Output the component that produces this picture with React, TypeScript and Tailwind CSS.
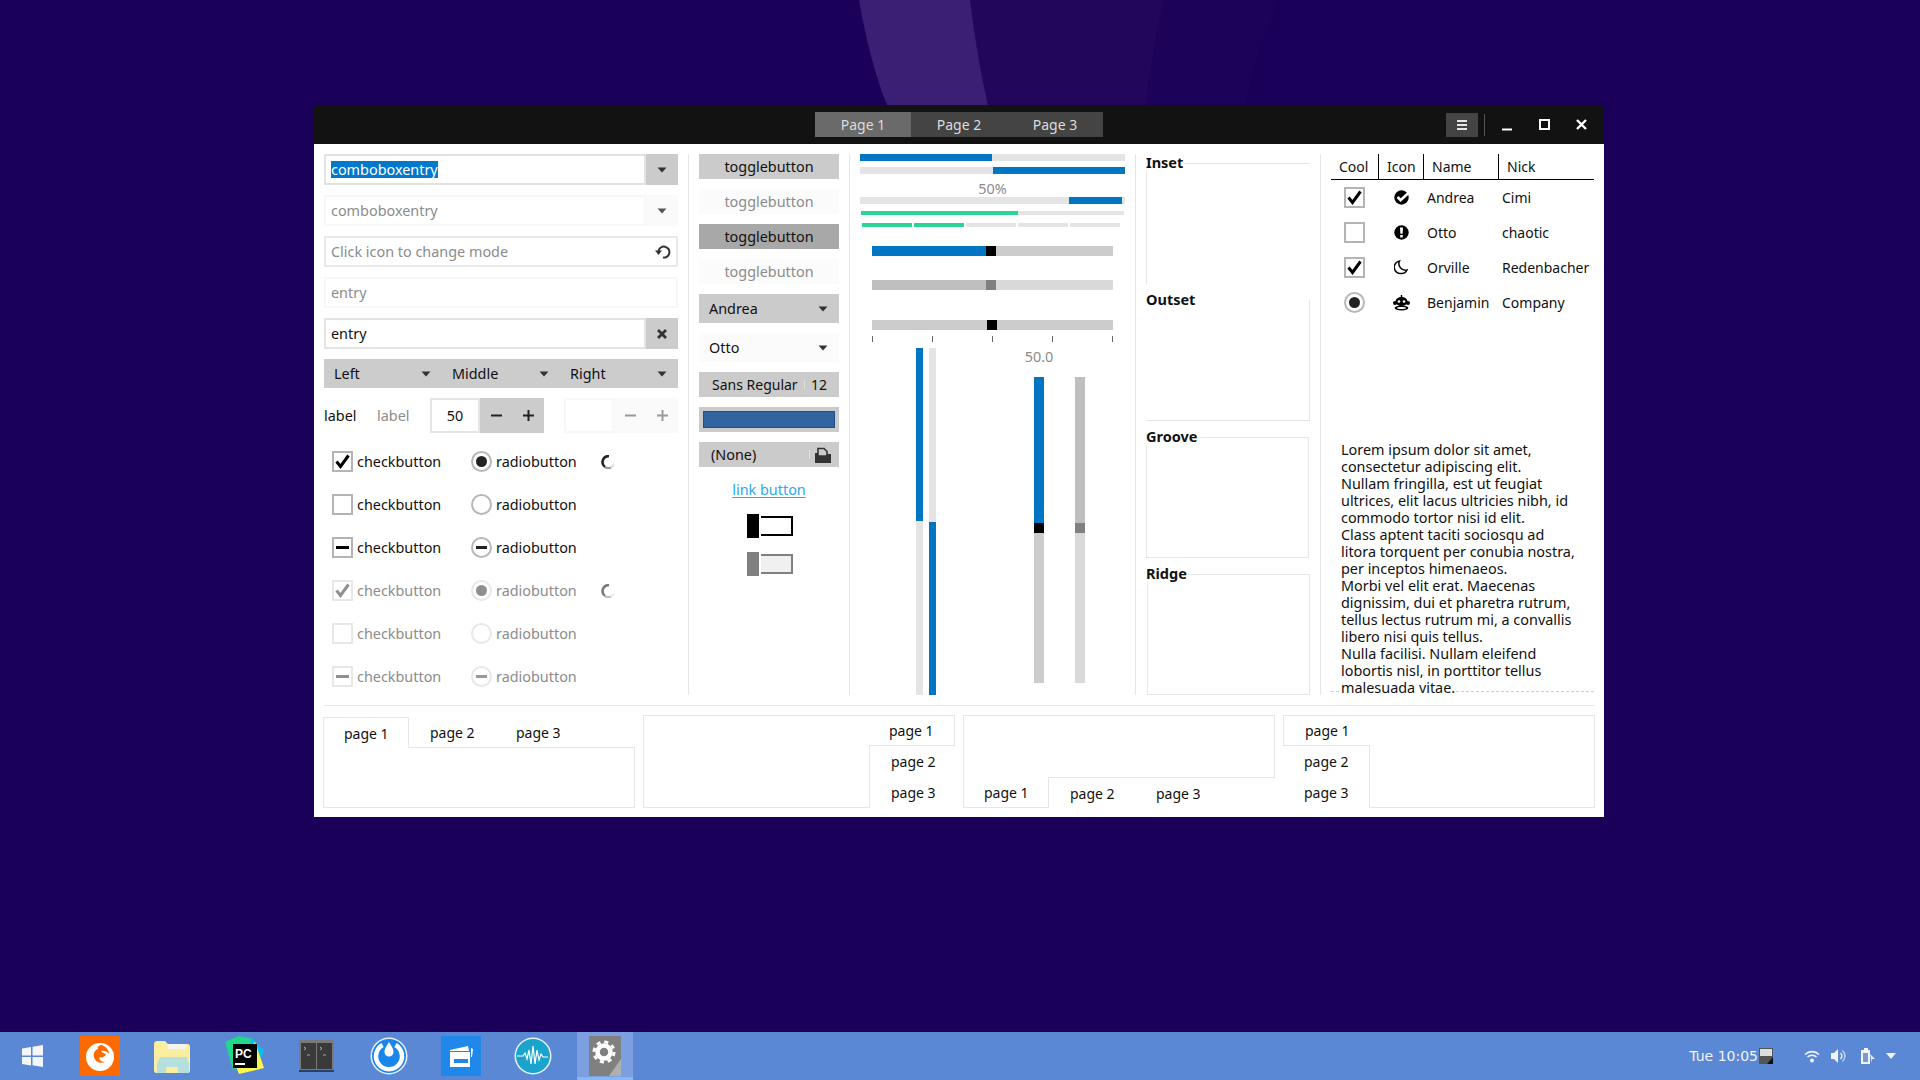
import type { ReactNode } from 'react';

function Arrow({ color = '#333' }: { color?: string }) {
	return (
		<svg width="10" height="6" viewBox="0 0 10 6" className="shrink-0">
			<path d="M0.5 0.5h9L5 5.5z" fill={color} />
		</svg>
	);
}

function Separator() {
	return <div className="w-px shrink-0 bg-[#e6e6e6]" />;
}

function Check({ mode, disabled }: { mode: 'on' | 'off' | 'mixed'; disabled?: boolean }) {
	const mark = disabled ? '#8f8f8f' : '#000';
	return (
		<div
			className={`flex h-[21px] w-[21px] shrink-0 items-center justify-center border-2 bg-white ${disabled ? 'border-[#e8e8e8]' : 'border-[#b4b4b4]'}`}
		>
			{mode === 'on' && (
				<svg width="17" height="17" viewBox="0 0 17 17">
					<path d="M2.5 8.5l4 5L14.5 2.5" fill="none" stroke={mark} strokeWidth="3" />
				</svg>
			)}
			{mode === 'mixed' && <div className="h-[3px] w-[13px]" style={{ background: mark }} />}
		</div>
	);
}

function Radio({ mode, disabled }: { mode: 'on' | 'off' | 'mixed'; disabled?: boolean }) {
	return (
		<div
			className={`flex h-[21px] w-[21px] shrink-0 items-center justify-center rounded-full border-2 bg-white ${disabled ? 'border-[#e8e8e8]' : 'border-[#b8b8b8]'}`}
		>
			{mode === 'on' && (
				<div className={`h-[11px] w-[11px] rounded-full ${disabled ? 'bg-[#8f8f8f]' : 'bg-[#222]'}`} />
			)}
			{mode === 'mixed' && (
				<div className={`h-[3px] w-[11px] ${disabled ? 'bg-[#999]' : 'bg-[#222]'}`} />
			)}
		</div>
	);
}

function Spinner({ faded }: { faded?: boolean }) {
	return (
		<svg width="14" height="14" viewBox="0 0 14 14" className={faded ? 'opacity-60' : ''}>
			<path d="M8 1.2A6 6 0 0 0 4 12" fill="none" stroke="#222" strokeWidth="2.6" />
			<path d="M4 12a6 6 0 0 0 6 .5" fill="none" stroke="#999" strokeWidth="2.2" />
			<path d="M10 12.5a6 6 0 0 0 2.8-3" fill="none" stroke="#ddd" strokeWidth="2" />
		</svg>
	);
}

function Entry({
	children,
	border,
	button,
	buttonBg,
}: {
	children: ReactNode;
	border: string;
	button?: ReactNode;
	buttonBg?: string;
}) {
	return (
		<div className="flex h-[31px] w-[354px]">
			<div className={`flex flex-1 items-center justify-between border-2 bg-white pl-[5px] pr-[2px] ${border}`}>
				{children}
			</div>
			{button && <div className={`flex w-[32px] items-center justify-center ${buttonBg}`}>{button}</div>}
		</div>
	);
}

function ChecksRow({
	check,
	radio,
	disabled,
	spinner,
}: {
	check: 'on' | 'off' | 'mixed';
	radio: 'on' | 'off' | 'mixed';
	disabled?: boolean;
	spinner?: boolean;
}) {
	const text = disabled ? 'text-[#8c8c8c]' : 'text-[#111]';
	return (
		<div className={`flex h-[43px] items-center pl-[8px] ${text}`}>
			<Check mode={check} disabled={disabled} />
			<span className="ml-[4px] w-[114px]">checkbutton</span>
			<Radio mode={radio} disabled={disabled} />
			<span className="ml-[4px] w-[105px]">radiobutton</span>
			{spinner && <Spinner faded={disabled} />}
		</div>
	);
}

function FirstColumn() {
	return (
		<div className="w-[354px] shrink-0">
			<div className="flex flex-col gap-[10px]">
				<Entry border="border-[#dfe3e5]" button={<Arrow />} buttonBg="bg-[#cbcbcb]">
					<span className="bg-[#0078cc] leading-[17px] text-white">comboboxentry</span>
				</Entry>
				<Entry border="border-[#f8f8f8]" button={<Arrow color="#555" />} buttonBg="bg-[#fafafa]">
					<span className="text-[#8c8c8c]">comboboxentry</span>
				</Entry>
				<Entry border="border-[#e9e9e9]">
					<span className="text-[#8c8c8c]">Click icon to change mode</span>
					<svg width="16" height="16" viewBox="0 0 16 16" className="mr-[3px]">
						<path d="M3.5 7A5.5 5.5 0 1 1 8 13.5" fill="none" stroke="#333" strokeWidth="2" />
						<path d="M0 6.5h7L3.5 11z" fill="#333" />
					</svg>
				</Entry>
				<Entry border="border-[#f8f8f8]">
					<span className="text-[#8c8c8c]">entry</span>
				</Entry>
				<Entry
					border="border-[#e4e4e4]"
					buttonBg="bg-[#cccccc]"
					button={
						<svg width="10" height="10" viewBox="0 0 10 10">
							<path d="M1 1l8 8M9 1l-8 8" stroke="#333" strokeWidth="2.8" />
						</svg>
					}
				>
					<span className="text-[#111]">entry</span>
				</Entry>
				<div className="flex h-[29px] bg-[#cccccc] text-[#111]">
					{['Left', 'Middle', 'Right'].map((item) => (
						<div key={item} className="flex w-[118px] items-center justify-between pl-[10px] pr-[11px]">
							<span>{item}</span>
							<Arrow />
						</div>
					))}
				</div>
				<div className="flex h-[35px] items-center">
					<span className="w-[53px] text-[#111]">label</span>
					<span className="w-[53px] text-[#8c8c8c]">label</span>
					<div className="flex h-[35px] w-[50px] items-center justify-center border-2 border-[#e6e6e6] text-[#111]">50</div>
					<div className="flex h-[35px] w-[64px] bg-[#cccccc]">
						<SpinSign sign="minus" color="#222" />
						<SpinSign sign="plus" color="#222" />
					</div>
					<div className="ml-[20px] h-[35px] w-[50px] border-2 border-[#f8f8f8]" />
					<div className="flex h-[35px] w-[64px] bg-[#fafafa]">
						<SpinSign sign="minus" color="#9a9a9a" />
						<SpinSign sign="plus" color="#9a9a9a" />
					</div>
				</div>
			</div>
			<div className="mt-[7px]">
				<ChecksRow check="on" radio="on" spinner />
				<ChecksRow check="off" radio="off" />
				<ChecksRow check="mixed" radio="mixed" />
				<ChecksRow check="on" radio="on" disabled spinner />
				<ChecksRow check="off" radio="off" disabled />
				<ChecksRow check="mixed" radio="mixed" disabled />
			</div>
		</div>
	);
}

function SpinSign({ sign, color }: { sign: 'plus' | 'minus'; color: string }) {
	return (
		<div className="flex w-[32px] items-center justify-center">
			<svg width="11" height="11" viewBox="0 0 11 11">
				<path d={sign === 'plus' ? 'M0 5.5h11M5.5 0v11' : 'M0 5.5h11'} stroke={color} strokeWidth="2" />
			</svg>
		</div>
	);
}

function Toggle({ bg, color }: { bg: string; color: string }) {
	return <div className={`flex h-[25px] items-center justify-center ${bg} ${color}`}>togglebutton</div>;
}

function ComboButton({ label, bg }: { label: string; bg: string }) {
	return (
		<div className={`flex h-[29px] items-center justify-between pl-[10px] pr-[11px] text-[#111] ${bg}`}>
			<span>{label}</span>
			<Arrow />
		</div>
	);
}

function SecondColumn() {
	return (
		<div className="flex w-[140px] shrink-0 flex-col gap-[10px]">
			<Toggle bg="bg-[#cbcbcb]" color="text-[#111]" />
			<Toggle bg="bg-[#fbfbfb]" color="text-[#8c8c8c]" />
			<Toggle bg="bg-[#a8a8a8]" color="text-[#111]" />
			<Toggle bg="bg-[#fbfbfb]" color="text-[#8c8c8c]" />
			<ComboButton label="Andrea" bg="bg-[#cbcbcb]" />
			<ComboButton label="Otto" bg="bg-[#fbfbfb]" />
			<div className="flex h-[25px] items-center bg-[#cbcbcb] pl-[13px] text-[14px] text-[#111]">
				<span className="w-[92px]">Sans Regular</span>
				<span className="h-[9px] w-px bg-[#e0e0e0]" />
				<span className="ml-[6px]">12</span>
			</div>
			<div className="flex h-[25px] items-center justify-center bg-[#cbcbcb]">
				<div className="h-[17px] w-[132px] border border-[#20508b] bg-[#32659f]" />
			</div>
			<div className="flex h-[25px] items-center bg-[#cbcbcb] pl-[12px] text-[#111]">
				<span className="w-[98px]">(None)</span>
				<span className="h-[9px] w-px bg-[#e0e0e0]" />
				<svg width="16" height="16" viewBox="0 0 16 16" className="ml-[5px]">
					<path d="M3 1.5h6l3 3V9H3z" fill="none" stroke="#333" strokeWidth="1.6" />
					<path d="M0 16V6h3v3h9V7h4v9z" fill="#333" />
				</svg>
			</div>
			<div className="mt-[2px] flex justify-center">
				<span className="text-[#2ea8ea] underline underline-offset-2">link button</span>
			</div>
			<SwitchOff handle="bg-black" box="border-black bg-white" className="mt-[3px]" />
			<SwitchOff handle="bg-[#808080]" box="border-[#808080] bg-[#f0f0f0]" className="mt-[4px]" />
		</div>
	);
}

function SwitchOff({ handle, box, className }: { handle: string; box: string; className: string }) {
	return (
		<div className={`flex items-center justify-center gap-[2px] pl-[2px] ${className}`}>
			<div className={`h-[24px] w-[12px] ${handle}`} />
			<div className={`h-[20px] w-[32px] border-2 border-l-0 ${box}`} />
		</div>
	);
}

function Hscale({ left, handle, right, width, className }: { left: string; handle: string; right: string; width: string; className: string }) {
	return (
		<div className={`ml-[12px] flex h-[10px] w-[241px] shrink-0 ${right} ${className}`}>
			<div className={`h-full ${left} ${width}`} />
			<div className={`h-full w-[10px] ${handle}`} />
		</div>
	);
}

function Vscale({ top, handle, bottom }: { top: string; handle: string; bottom: string }) {
	return (
		<div className={`flex h-[306px] w-[10px] flex-col ${bottom}`}>
			<div className={`h-[146px] w-full ${top}`} />
			<div className={`h-[10px] w-full ${handle}`} />
		</div>
	);
}

function ThirdColumn() {
	return (
		<div className="flex w-[265px] shrink-0 flex-col">
			<div className="h-[7px] shrink-0 bg-[#e4e4e4]">
				<div className="h-full w-[132px] bg-[#0075c4]" />
			</div>
			<div className="mt-[6px] flex h-[7px] shrink-0 justify-end bg-[#e4e4e4]">
				<div className="h-full w-[132px] bg-[#0075c4]" />
			</div>
			<div className="mt-[6px] h-[17px] shrink-0 text-center leading-[18px] text-[#8c8c8c]">50%</div>
			<div className="flex h-[7px] shrink-0 justify-end bg-[#e4e4e4] pr-[3px]">
				<div className="h-full w-[53px] bg-[#0075c4]" />
			</div>
			<div className="mx-px mt-[7px] h-[4px] shrink-0 bg-[#e4e4e4]">
				<div className="h-full w-[157px] bg-[#27d692]" />
			</div>
			<div className="mt-[8px] flex shrink-0 gap-[2px] pl-[2px]">
				{[0, 1, 2, 3, 4].map((i) => (
					<div key={i} className={`h-[4px] w-[50px] ${i < 2 ? 'bg-[#27d692]' : 'bg-[#e4e4e4]'}`} />
				))}
			</div>
			<Hscale className="mt-[19px]" left="bg-[#0075c4]" handle="bg-black" right="bg-[#cccccc]" width="w-[114px]" />
			<Hscale className="mt-[24px]" left="bg-[#bfbfbf]" handle="bg-[#808080]" right="bg-[#d9d9d9]" width="w-[114px]" />
			<Hscale className="mt-[30px]" left="bg-[#cccccc]" handle="bg-black" right="bg-[#cccccc]" width="w-[115px]" />
			<div className="ml-[12px] mt-[6px] flex h-[6px] w-[241px] shrink-0 justify-between">
				{[0, 1, 2, 3, 4].map((i) => (
					<div key={i} className="h-full w-px bg-[#666]" />
				))}
			</div>
			<div className="mt-[6px] flex min-h-0 flex-1">
				<div className="ml-[56px] flex h-[347px] w-[7px] flex-col bg-[#e4e4e4]">
					<div className="h-[173px] w-full bg-[#0075c4]" />
				</div>
				<div className="ml-[6px] flex h-[347px] w-[7px] flex-col justify-end bg-[#e4e4e4]">
					<div className="h-[173px] w-full bg-[#0075c4]" />
				</div>
				<div className="ml-[98px] flex w-[51px] flex-col">
					<div className="-ml-[20px] h-[18px] w-[50px] text-center leading-[18px] text-[#8c8c8c]">50.0</div>
					<div className="mt-[11px] flex gap-[31px]">
						<Vscale top="bg-[#0075c4]" handle="bg-black" bottom="bg-[#cccccc]" />
						<Vscale top="bg-[#bfbfbf]" handle="bg-[#808080]" bottom="bg-[#d9d9d9]" />
					</div>
				</div>
			</div>
		</div>
	);
}

function Frame({ label, box, className }: { label: string; box: string; className?: string }) {
	return (
		<div className={`relative h-[130px] pt-[9px] ${className ?? ''}`}>
			<div className={`h-[121px] border-[#e6e6e6] ${box}`} />
			<span className="absolute -top-px left-0 bg-white pr-px text-[14.5px] font-bold leading-[18px] text-[#111]">{label}</span>
		</div>
	);
}

function FourthColumn() {
	return (
		<div className="flex w-[164px] shrink-0 flex-col gap-[7px]">
			<Frame label="Inset" box="border-l border-t" />
			<Frame label="Outset" box="border-b border-r" />
			<Frame label="Groove" box="mr-px border" />
			<Frame label="Ridge" box="ml-px border" />
		</div>
	);
}

function FaceIcon({ name }: { name: string }) {
	if (name === 'Andrea') {
		return (
			<svg width="15" height="15" viewBox="0 0 15 15">
				<circle cx="7.5" cy="7.5" r="7.2" fill="#000" />
				<path d="M3.6 7l3 3.2L15 2.5" fill="none" stroke="#fff" strokeWidth="2.6" />
			</svg>
		);
	}
	if (name === 'Otto') {
		return (
			<svg width="15" height="15" viewBox="0 0 15 15">
				<circle cx="7.5" cy="7.5" r="7.2" fill="#000" />
				<path d="M6 2.5h3l-.4 6.2H6.4zM6.2 10h2.6v2.6H6.2z" fill="#fff" />
			</svg>
		);
	}
	if (name === 'Orville') {
		return (
			<svg width="14" height="15" viewBox="0 0 14 15">
				<path d="M5.5 1A6.3 6.3 0 0 0 7 13.5 6 6 0 0 0 13 10 6.5 6.5 0 0 1 5.5 1z" fill="none" stroke="#111" strokeWidth="1.6" />
			</svg>
		);
	}
	return (
		<svg width="17" height="16" viewBox="0 0 17 16">
			<path d="M8.5 0v3" stroke="#000" strokeWidth="1.5" />
			<ellipse cx="8.5" cy="6.5" rx="6" ry="4.5" fill="#000" />
			<circle cx="2" cy="8" r="2" fill="#000" />
			<circle cx="15" cy="8" r="2" fill="#000" />
			<circle cx="6" cy="6.5" r="1.3" fill="#fff" />
			<circle cx="11" cy="6.5" r="1.3" fill="#fff" />
			<ellipse cx="8.5" cy="13" rx="6.8" ry="2.5" fill="#000" />
			<ellipse cx="8.5" cy="13" rx="4.5" ry="1" fill="#fff" />
		</svg>
	);
}

const people = [
	{ name: 'Andrea', nick: 'Cimi', cool: 'check' },
	{ name: 'Otto', nick: 'chaotic', cool: 'empty' },
	{ name: 'Orville', nick: 'Redenbacher', cool: 'check' },
	{ name: 'Benjamin', nick: 'Company', cool: 'radio' },
];

const lorem = [
	'Lorem ipsum dolor sit amet,',
	'consectetur adipiscing elit.',
	'Nullam fringilla, est ut feugiat',
	'ultrices, elit lacus ultricies nibh, id',
	'commodo tortor nisi id elit.',
	'Class aptent taciti sociosqu ad',
	'litora torquent per conubia nostra,',
	'per inceptos himenaeos.',
	'Morbi vel elit erat. Maecenas',
	'dignissim, dui et pharetra rutrum,',
	'tellus lectus rutrum mi, a convallis',
	'libero nisi quis tellus.',
	'Nulla facilisi. Nullam eleifend',
	'lobortis nisl, in porttitor tellus',
];

function FifthColumn() {
	return (
		<div className="flex w-[263px] shrink-0 flex-col text-[#111]">
			<div className="h-[287px] text-[14px]">
				<div className="flex h-[26px] border-b border-black">
					<div className="w-[48px] border-r border-black pl-[8px] leading-[25px]">Cool</div>
					<div className="w-[45px] border-r border-black pl-[8px] leading-[25px]">Icon</div>
					<div className="w-[75px] border-r border-black pl-[8px] leading-[25px]">Name</div>
					<div className="pl-[8px] leading-[25px]">Nick</div>
				</div>
				{people.map((person) => (
					<div key={person.name} className="flex h-[35px] items-center">
						<div className="flex w-[47px] justify-center">
							{person.cool === 'radio' ? <Radio mode="on" /> : <Check mode={person.cool === 'check' ? 'on' : 'off'} />}
						</div>
						<div className="flex w-[46px] justify-center">
							<FaceIcon name={person.name} />
						</div>
						<div className="w-[75px] pl-[3px]">{person.name}</div>
						<div className="pl-[3px]">{person.nick}</div>
					</div>
				))}
			</div>
			<div className="relative h-[253px] overflow-hidden pl-[10px] leading-[17px]">
				<div className="absolute bottom-[2px] left-0 w-full border-b border-dashed border-[#cfcfcf]" />
				{lorem.map((line) => (
					<div key={line} className="relative whitespace-nowrap">
						{line}
					</div>
				))}
				<div className="relative whitespace-nowrap">
					<span className="bg-white">malesuada vitae.</span>
				</div>
			</div>
		</div>
	);
}

function NotebookTop() {
	return (
		<div className="flex h-[93px] w-[312px] flex-col pt-[2px] text-[#111]">
			<div className="flex h-[30px]">
				<div className="z-10 -mb-px flex w-[86px] items-center border border-b-0 border-[#e6e6e6] bg-white pl-[20px] pt-px">page 1</div>
				<div className="flex w-[86px] items-center pl-[21px] pt-px">page 2</div>
				<div className="flex w-[86px] items-center pl-[21px] pt-px">page 3</div>
			</div>
			<div className="flex-1 border border-[#e6e6e6]" />
		</div>
	);
}

function NotebookRight() {
	return (
		<div className="flex h-[93px] w-[312px] text-[#111]">
			<div className="flex-1 border border-[#e6e6e6]" />
			<div className="flex w-[85px] flex-col">
				<div className="z-10 -ml-px flex h-[31px] items-center border border-l-0 border-[#e6e6e6] bg-white pl-[20px]">page 1</div>
				<div className="flex h-[31px] items-center pl-[21px]">page 2</div>
				<div className="flex h-[31px] items-center pl-[21px]">page 3</div>
			</div>
		</div>
	);
}

function NotebookBottom() {
	return (
		<div className="flex h-[93px] w-[312px] flex-col text-[#111]">
			<div className="flex-1 border border-[#e6e6e6]" />
			<div className="flex h-[30px]">
				<div className="z-10 -mt-px flex w-[86px] items-center border border-t-0 border-[#e6e6e6] bg-white pl-[20px]">page 1</div>
				<div className="flex w-[86px] items-center pl-[21px]">page 2</div>
				<div className="flex w-[86px] items-center pl-[21px]">page 3</div>
			</div>
		</div>
	);
}

function NotebookLeft() {
	return (
		<div className="flex h-[93px] w-[312px] text-[#111]">
			<div className="flex w-[86px] flex-col">
				<div className="z-10 -mr-px flex h-[31px] items-center border border-r-0 border-[#e6e6e6] bg-white pl-[21px]">page 1</div>
				<div className="flex h-[31px] items-center pl-[21px]">page 2</div>
				<div className="flex h-[31px] items-center pl-[21px]">page 3</div>
			</div>
			<div className="flex-1 border border-[#e6e6e6]" />
		</div>
	);
}

function TitleBar() {
	return (
		<div className="flex h-[39px] items-center bg-[#121212] pl-[501px]">
			<div className="flex h-[25px] text-[14px] text-[#dcdcdc]">
				<div className="flex w-[96px] items-center justify-center bg-[#6a6a6a]">Page 1</div>
				<div className="flex w-[96px] items-center justify-center bg-[#444444]">Page 2</div>
				<div className="flex w-[96px] items-center justify-center bg-[#444444]">Page 3</div>
			</div>
			<div className="ml-[343px] flex h-[24px] w-[32px] items-center justify-center bg-[#444444]">
				<svg width="10" height="10" viewBox="0 0 10 10">
					<path d="M0 1h10M0 5h10M0 9h10" stroke="#e6e6e6" strokeWidth="2" />
				</svg>
			</div>
			<div className="ml-[6px] h-[22px] w-px bg-[#555]" />
			<svg width="12" height="12" viewBox="0 0 12 12" className="ml-[16px]">
				<path d="M1 10.5h10" stroke="#fff" strokeWidth="2" />
			</svg>
			<svg width="11" height="11" viewBox="0 0 11 11" className="ml-[26px]">
				<rect x="1" y="1" width="9" height="9" fill="none" stroke="#fff" strokeWidth="2" />
			</svg>
			<svg width="11" height="11" viewBox="0 0 11 11" className="ml-[26px]">
				<path d="M1 1l9 9M10 1l-9 9" stroke="#fff" strokeWidth="2.4" />
			</svg>
		</div>
	);
}

function GtkWindow() {
	return (
		<div className="absolute left-[314px] top-[105px] h-[712px] w-[1290px] bg-white font-['Noto_Sans',sans-serif] text-[14.4px]">
			<TitleBar />
			<div className="flex h-[551px] gap-[10px] px-[10px] pt-[10px]">
				<FirstColumn />
				<Separator />
				<SecondColumn />
				<Separator />
				<ThirdColumn />
				<Separator />
				<FourthColumn />
				<Separator />
				<FifthColumn />
			</div>
			<div className="mx-[10px] mt-[10px] h-px bg-[#e6e6e6]" />
			<div className="ml-[9px] mt-[9px] flex gap-[8px] text-[14px]">
				<NotebookTop />
				<NotebookRight />
				<NotebookBottom />
				<NotebookLeft />
			</div>
		</div>
	);
}

function Wallpaper() {
	return (
		<svg width="1920" height="105" viewBox="0 0 1920 105" className="block">
			<path d="M970 0C975 40 981 75 988 105H1146C1150 70 1156 35 1164 0z" fill="#21065c" />
			<path d="M859 0C866 40 875 75 887 105H988C981 75 975 40 970 0z" fill="#3a1f74" />
			<path d="M1163 0C1157 35 1150 70 1146 105H1245C1252 70 1262 35 1280 0z" fill="#1d0259" />
		</svg>
	);
}

function Taskbar() {
	return (
		<div className="flex h-[48px] items-center bg-[#5b88d5]">
			<div className="ml-[22px] h-[22px] w-[21px]">
				<svg width="21" height="22" viewBox="0 0 21 22">
					<path d="M0 3.5L9 2v8.5H0zM10.5 1.8L21 0v10.5H10.5zM0 12h9v8.5L0 19zM10.5 12H21v10l-10.5-1.8z" fill="#f4f6fb" />
				</svg>
			</div>
			<div className="ml-[37px] h-[40px] w-[40px]">
				<svg width="40" height="40" viewBox="0 0 40 40">
					<rect width="40" height="40" fill="#ff6a00" />
					<circle cx="20" cy="21" r="14" fill="#fff" />
					<path d="M21 9c5 1 8 5 8 9-2-3-5-4-8-3 1 2 3 2 5 3-1 3-4 4-6 3-2 2 1 5 5 5-4 2-10 0-11-5-1-4 1-7 4-8-1-2 0-3 3-4z" fill="#ff6a00" />
				</svg>
			</div>
			<div className="ml-[34px] h-[35px] w-[36px]">
				<svg width="36" height="35" viewBox="0 0 36 35">
					<path d="M0 6c0-3 1-4 3-4h8l3 3h20c1 0 2 1 2 3v23c0 2-1 3-2 3H2c-1 0-2-1-2-3z" fill="#fbeea0" />
					<path d="M14 5h18v5H14z" fill="#f5f5f0" />
					<path d="M3 25l3-7h27l2 7v9H3z" fill="#b5e0de" />
					<path d="M12 28h12v6H12z" fill="#fbeea0" />
				</svg>
			</div>
			<div className="ml-[35px] h-[40px] w-[40px]">
				<svg width="40" height="40" viewBox="0 0 40 40">
					<path d="M0 6L14 0l14 3v22L8 34z" fill="#21d789" />
					<path d="M26 1l13 14-4 8H24z" fill="#07c3f2" />
					<path d="M30 6l9 26-25 6L10 28z" fill="#fcf84a" />
					<rect x="8" y="8" width="24" height="24" fill="#000" />
					<text x="10" y="22" fill="#fff" fontSize="12" fontWeight="700" fontFamily="Liberation Sans, sans-serif">PC</text>
					<rect x="10" y="27" width="10" height="2" fill="#fff" />
				</svg>
			</div>
			<div className="ml-[34px] h-[32px] w-[35px]">
				<svg width="35" height="32" viewBox="0 0 35 32">
					<rect width="35" height="31" rx="1" fill="#7a7a7a" />
					<rect x="2" y="3" width="15" height="26" fill="#3a3a3a" />
					<rect x="18" y="3" width="15" height="26" fill="#3a3a3a" />
					<path d="M5 7l2 1.5L5 10M21 7l2 1.5-2 1.5M8 15h3M24 15h3" stroke="#ccc" strokeWidth="0.8" fill="none" />
					<rect y="30" width="35" height="2" fill="#25406e" />
				</svg>
			</div>
			<div className="ml-[36px] h-[38px] w-[38px]">
				<svg width="38" height="38" viewBox="0 0 38 38">
					<circle cx="19" cy="19" r="18.5" fill="#e8eef8" />
					<circle cx="19" cy="19" r="17" fill="#1a86ec" />
					<path d="M12.5 8a13 13 0 1 0 13 0" fill="none" stroke="#fff" strokeWidth="4.5" />
					<path d="M19 5c3 5 4.5 7 4.5 10a4.5 4.5 0 0 1-9 0c0-3 1.5-5 4.5-10z" fill="#fff" />
				</svg>
			</div>
			<div className="ml-[33px] h-[40px] w-[40px]">
				<svg width="40" height="40" viewBox="0 0 40 40">
					<rect width="40" height="40" fill="#1f88ea" />
					<path d="M9 14l18-4 1 5H9zM9 16h20v15H9z" fill="#fff" />
					<path d="M13 23h14v4H13z" fill="#1f88ea" />
					<path d="M30 12l2 1-1 8h-1z" fill="#fff" />
				</svg>
			</div>
			<div className="ml-[33px] h-[38px] w-[38px]">
				<svg width="38" height="38" viewBox="0 0 38 38">
					<circle cx="19" cy="19" r="18.5" fill="#e8f4f8" />
					<circle cx="19" cy="19" r="17" fill="#1aa3cc" />
					<path d="M3 19h6l2-3 2 6 2-9 2 14 2-18 2 18 2-14 2 10 2-6 2 3h5" fill="none" stroke="#fff" strokeWidth="1.2" />
				</svg>
			</div>
			<div className="ml-[25px] flex h-[48px] w-[56px] items-center justify-center border-b-[3px] border-[#86b6fb] bg-[#7b9fe0] pt-[3px]">
				<svg width="32" height="40" viewBox="0 0 32 40">
					<rect width="32" height="40" fill="#808080" />
					<path d="M32 23L20 40h12z" fill="#b0b0b0" />
					<circle cx="15" cy="16" r="6.5" fill="none" stroke="#fff" strokeWidth="4.5" />
					<circle cx="15" cy="16" r="10" fill="none" stroke="#fff" strokeWidth="3" strokeDasharray="4 3.85" />
				</svg>
			</div>
			<div className="ml-auto flex items-center font-['DejaVu_Sans',sans-serif] text-[14px] text-[#f2f4fa]">
				<span>Tue 10:05</span>
				<svg width="14" height="16" viewBox="0 0 14 16" className="ml-px">
					<rect width="14" height="16" fill="#555" />
					<rect x="1" y="1" width="12" height="7" fill="#ddd" />
					<path d="M8 16l6-7v7z" fill="#111" />
				</svg>
				<svg width="16" height="13" viewBox="0 0 16 13" className="ml-[31px]">
					<path d="M1 4.5a10 10 0 0 1 14 0M3.5 7a6.5 6.5 0 0 1 9 0" fill="none" stroke="#f2f4fa" strokeWidth="1.6" />
					<circle cx="8" cy="10.5" r="2" fill="#f2f4fa" />
				</svg>
				<svg width="16" height="16" viewBox="0 0 16 16" className="ml-[11px]">
					<path d="M0 5h3l4-4v14l-4-4H0z" fill="#f2f4fa" />
					<path d="M9.5 5a4 4 0 0 1 0 6" fill="none" stroke="#f2f4fa" strokeWidth="1.4" />
					<path d="M11.5 2.5a7.5 7.5 0 0 1 0 11" fill="none" stroke="#c5d4ef" strokeWidth="1.4" />
				</svg>
				<svg width="16" height="16" viewBox="0 0 16 16" className="ml-[13px]">
					<path d="M4 0h4v2h2v14H1V2h3z" fill="#f2f4fa" />
					<rect x="3" y="5" width="5" height="9" fill="#7d9ad0" />
					<path d="M10 6l5 5-3 0 0 4z" fill="#f2f4fa" />
				</svg>
				<svg width="10" height="6" viewBox="0 0 10 6" className="ml-[10px] mr-[24px]">
					<path d="M0 0h10L5 6z" fill="#f2f4fa" />
				</svg>
			</div>
		</div>
	);
}

export default function App() {
	return (
		<div className="flex h-[1080px] w-[1920px] flex-col overflow-hidden bg-[#1a0058]">
			<div className="relative flex-1">
				<Wallpaper />
				<GtkWindow />
			</div>
			<Taskbar />
		</div>
	);
}
